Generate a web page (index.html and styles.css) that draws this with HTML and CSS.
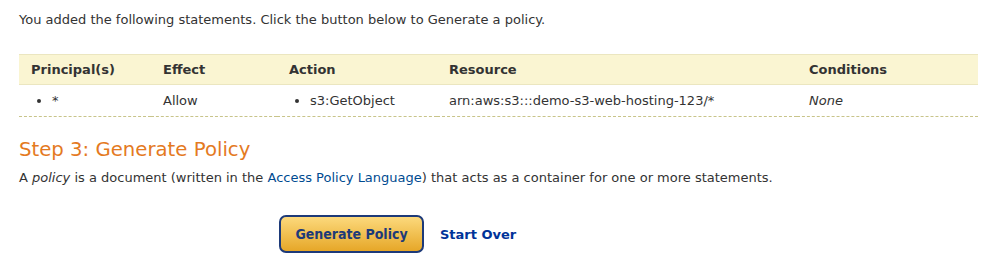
FILE: index.html
```html
<!DOCTYPE html>
<html>
<head>
<meta charset="utf-8">
<link rel="stylesheet" href="styles.css">
</head>
<body>
<div class="page">
  <p class="intro">You added the following statements. Click the button below to Generate a policy.</p>
  <table class="stmts">
    <thead>
      <tr>
        <th class="c-principal">Principal(s)</th>
        <th class="c-effect">Effect</th>
        <th class="c-action">Action</th>
        <th class="c-resource">Resource</th>
        <th class="c-cond">Conditions</th>
      </tr>
    </thead>
    <tbody>
      <tr>
        <td><ul class="bl"><li>*</li></ul></td>
        <td>Allow</td>
        <td><ul class="bl"><li>s3:GetObject</li></ul></td>
        <td>arn:aws:s3:::demo-s3-web-hosting-123/*</td>
        <td><em>None</em></td>
      </tr>
    </tbody>
  </table>
  <h2 class="step">Step 3: Generate Policy</h2>
  <p class="desc">A <em>policy</em> is a document (written in the <a href="#" class="link">Access Policy Language</a>) that acts as a container for one or more statements.</p>
  <div class="actions">
    <button class="gen">Generate Policy</button>
    <a href="#" class="over">Start Over</a>
  </div>
</div>
</body>
</html>
```

FILE: styles.css
```css
html, body { margin: 0; padding: 0; background: #fff; }
body {
  font-family: "DejaVu Sans", Verdana, sans-serif;
  font-size: 13px;
  color: #333;
}
.page { padding: 12px 13px 0 19px; }
.intro { margin: 0; line-height: 16px; }
.stmts {
  margin-top: 26px;
  width: 959px;
  border-collapse: collapse;
}
.stmts th {
  background: #faf5d2;
  border-top: 1px solid #ebe6c0;
  border-bottom: 1px solid #ebe6c0;
  text-align: left;
  font-weight: bold;
  font-size: 13px;
  color: #333;
  height: 29px;
  padding: 0 0 0 12px;
}
.stmts td {
  height: 30px;
  padding: 0 0 1px 12px;
  border-bottom: 1px dashed #c8c48a;
  vertical-align: middle;
}
.c-principal { width: 120px; }
.c-effect { width: 114px; }
.c-action { width: 148px; }
.c-resource { width: 348px; }
.bl { margin: 0; padding: 0 0 0 21px; list-style: disc; }
.step {
  margin: 20px 0 0 0;
  font-family: "DejaVu Sans", sans-serif;
  font-weight: normal;
  font-size: 19.7px;
  color: #e47a1f;
  line-height: 25px;
}
.desc { margin: 8px 0 0 0; line-height: 16px; }
.link { color: #004b91; text-decoration: none; }
.actions {
  display: flex;
  align-items: center;
  margin: 29px 0 0 260px;
  gap: 16px;
}
.gen {
  width: 145px;
  height: 38px;
  border: 2px solid #1d3a79;
  border-radius: 7px;
  background: linear-gradient(#fcd97c, #e6a728);
  font-family: "DejaVu Sans Condensed", "DejaVu Sans", sans-serif;
  font-size: 14px;
  font-weight: bold;
  color: #1d3a79;
  padding: 0;
}
.over {
  font-size: 13px;
  font-weight: bold;
  color: #003399;
  text-decoration: none;
}
```
